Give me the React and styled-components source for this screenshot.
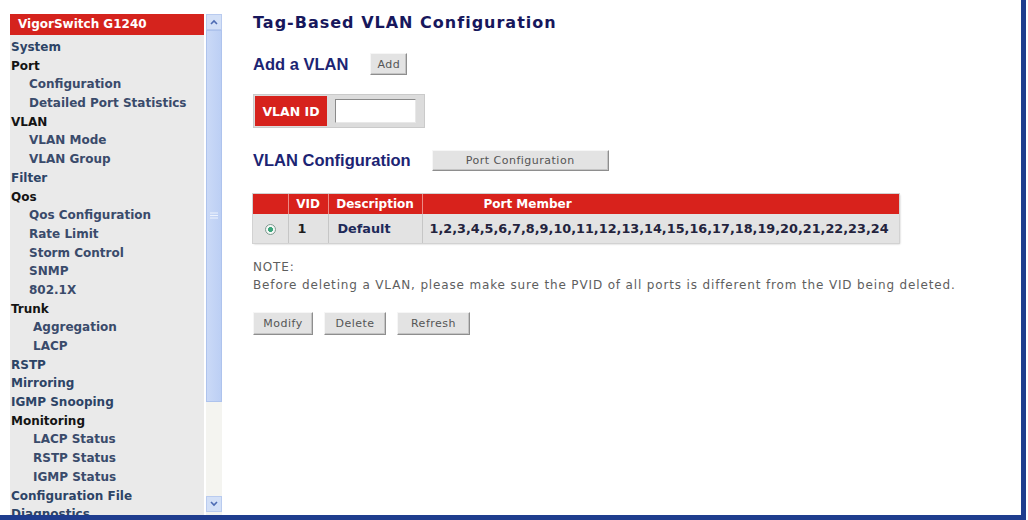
import React from 'react';
import styled, { createGlobalStyle } from 'styled-components';

const GlobalStyle = createGlobalStyle`
  html, body { margin: 0; padding: 0; background: #fff; }
  body { font-family: "DejaVu Sans", Verdana, sans-serif; overflow: hidden; }
`;

const Window = styled.div`
  box-sizing: border-box;
  width: 1026px;
  height: 520px;
  border-right: 5px solid #1f3d8e;
  border-bottom: 5px solid #1f3d8e;
  display: flex;
  padding: 14px 0 0 10px;
  overflow: hidden;
`;

/* ---------- left navigation frame ---------- */
const Sidebar = styled.aside`
  display: flex;
  gap: 2px;
  width: 212px;
  flex: none;
  height: 501px;
`;

const MenuPanel = styled.nav`
  width: 194px;
  background: #eaeaea;
  overflow: hidden;
  font: bold 12px "DejaVu Sans", Verdana, sans-serif;
`;

const Brand = styled.div`
  height: 21px;
  line-height: 21px;
  background: #d5231d;
  color: #fff;
  padding-left: 8px;
  white-space: nowrap;
`;

const MenuList = styled.ul`
  list-style: none;
  margin: 0;
  padding: 3px 0 0;
`;

const indent = [1, 19, 23];

const MenuItem = styled.li`
  height: 18.7px;
  line-height: 18.7px;
  white-space: nowrap;
  padding-left: ${(p) => indent[p.$level]}px;
  color: ${(p) => (p.$group ? '#141414' : p.$level ? '#3a4b6b' : '#2d4466')};
`;

const Scrollbar = styled.div`
  width: 16px;
  display: flex;
  flex-direction: column;
  padding-bottom: 3px;
  background: #f4f4f0;
`;

const ScrollButton = styled.div`
  box-sizing: border-box;
  height: 16px;
  background: #d3e0f7;
  border: 1px solid #b9cbef;
  display: flex;
  align-items: center;
  justify-content: center;
`;

const Thumb = styled.div`
  box-sizing: border-box;
  height: 372px;
  background: linear-gradient(90deg, #cad9f7, #bccff4);
  border: 1px solid #aec3ed;
  display: flex;
  align-items: center;
  justify-content: center;
`;

const Track = styled.div`
  flex: 1;
`;

/* ---------- content frame ---------- */
const Main = styled.main`
  margin-left: 31px;
  display: flex;
  flex-direction: column;
  align-items: flex-start;
`;

const Title = styled.h1`
  margin: 0;
  font: bold 16px "DejaVu Sans", Verdana, sans-serif;
  letter-spacing: 1px;
  line-height: 18px;
  color: #17175c;
`;

const Row = styled.div`
  display: flex;
  align-items: center;
  margin-top: ${(p) => p.$top}px;
  gap: ${(p) => p.$gap}px;
`;

const Heading = styled.h2`
  margin: 0;
  font: bold 16.5px "Liberation Sans", Arial, sans-serif;
  color: #1c2473;
`;

const Button = styled.button`
  box-sizing: border-box;
  width: ${(p) => p.$w}px;
  height: ${(p) => p.$h || 22}px;
  padding: 0;
  background: #e3e3e3;
  border: 1px solid;
  border-color: #f6f6f6 #8e8e8e #8e8e8e #f6f6f6;
  box-shadow: inset -1px -1px 0 #c4c4c4;
  font: 11px "DejaVu Sans", Verdana, sans-serif;
  letter-spacing: 0.5px;
  color: #555;
`;

const IdBox = styled.div`
  box-sizing: border-box;
  margin-top: 19px;
  width: 172px;
  height: 34px;
  padding: 1px 8px 1px 1px;
  display: flex;
  align-items: center;
  gap: 8px;
  background: #dcdcdc;
  border: 1px solid #cacaca;
`;

const IdLabel = styled.label`
  align-self: stretch;
  width: 74px;
  display: flex;
  align-items: center;
  justify-content: center;
  background: #d6221c;
  color: #fff;
  font: bold 12.5px "DejaVu Sans", Verdana, sans-serif;
`;

const IdInput = styled.input`
  box-sizing: border-box;
  width: 81px;
  height: 24px;
  border: 1px solid;
  border-color: #8a8a8a #e8e8e8 #e8e8e8 #8a8a8a;
  background: #fff;
  outline: none;
`;

const Table = styled.table`
  margin-top: 23px;
  width: 646px;
  border-collapse: collapse;
  table-layout: fixed;
  box-shadow: 0 0 0 1px #d2d2d2, 1px 1px 2px rgba(0, 0, 0, 0.25);
`;

const HeadCell = styled.th`
  height: 20px;
  padding: 0 0 0 ${(p) => p.$pad || 0}px;
  background: #d8221c;
  color: #fff;
  font: bold 12px "DejaVu Sans", Verdana, sans-serif;
  text-align: ${(p) => (p.$pad ? 'left' : 'center')};
  border-left: 1px solid #ec8b86;
  &:first-child { border-left: none; }
`;

const Cell = styled.td`
  height: 29px;
  padding: 0 0 0 ${(p) => p.$pad || 0}px;
  background: #e3e3e3;
  font: bold 12.8px "DejaVu Sans", Verdana, sans-serif;
  color: ${(p) => p.$color || '#23233d'};
  text-align: ${(p) => (p.$pad ? 'left' : 'center')};
  white-space: nowrap;
  border-left: 1px solid #c6c6c6;
  &:first-child { border-left: none; }
`;

const Radio = styled.span`
  display: inline-block;
  box-sizing: border-box;
  width: 11px;
  height: 11px;
  border-radius: 50%;
  border: 1px solid #7f9a90;
  background: radial-gradient(circle, #3aa57a 0 2.2px, #f4f8f6 2.8px);
  vertical-align: middle;
`;

const Note = styled.p`
  margin: 15px 0 0;
  font: 12px "DejaVu Sans", Verdana, sans-serif;
  letter-spacing: 0.85px;
  line-height: 18px;
  color: #5e5e5e;
  white-space: nowrap;
`;

const Chevron = ({ up }) => (
  <svg width="8" height="6" viewBox="0 0 8 6">
    <path
      d={up ? 'M1 5 L4 2 L7 5' : 'M1 1 L4 4 L7 1'}
      fill="none"
      stroke="#4d6bb3"
      strokeWidth="1.6"
    />
  </svg>
);

const Grip = () => (
  <svg width="8" height="8" viewBox="0 0 8 8">
    {[1, 3.5, 6].map((y) => (
      <line key={y} x1="0" x2="8" y1={y} y2={y} stroke="#eef3fd" strokeWidth="1" />
    ))}
  </svg>
);

const menu = [
  { t: 'System', l: 0 },
  { t: 'Port', l: 0, g: true },
  { t: 'Configuration', l: 1 },
  { t: 'Detailed Port Statistics', l: 1 },
  { t: 'VLAN', l: 0, g: true },
  { t: 'VLAN Mode', l: 1 },
  { t: 'VLAN Group', l: 1 },
  { t: 'Filter', l: 0 },
  { t: 'Qos', l: 0, g: true },
  { t: 'Qos Configuration', l: 1 },
  { t: 'Rate Limit', l: 1 },
  { t: 'Storm Control', l: 1 },
  { t: 'SNMP', l: 1 },
  { t: '802.1X', l: 1 },
  { t: 'Trunk', l: 0, g: true },
  { t: 'Aggregation', l: 2 },
  { t: 'LACP', l: 2 },
  { t: 'RSTP', l: 0 },
  { t: 'Mirroring', l: 0 },
  { t: 'IGMP Snooping', l: 0 },
  { t: 'Monitoring', l: 0, g: true },
  { t: 'LACP Status', l: 2 },
  { t: 'RSTP Status', l: 2 },
  { t: 'IGMP Status', l: 2 },
  { t: 'Configuration File', l: 0 },
  { t: 'Diagnostics', l: 0 },
];

const ports = Array.from({ length: 24 }, (_, i) => i + 1).join(',');

export default function App() {
  return (
    <>
      <GlobalStyle />
      <Window>
        <Sidebar>
          <MenuPanel>
            <Brand>VigorSwitch G1240</Brand>
            <MenuList>
              {menu.map((m) => (
                <MenuItem key={m.t} $level={m.l} $group={m.g}>
                  {m.t}
                </MenuItem>
              ))}
            </MenuList>
          </MenuPanel>
          <Scrollbar>
            <ScrollButton>
              <Chevron up />
            </ScrollButton>
            <Thumb>
              <Grip />
            </Thumb>
            <Track />
            <ScrollButton>
              <Chevron />
            </ScrollButton>
          </Scrollbar>
        </Sidebar>

        <Main>
          <Title>Tag-Based VLAN Configuration</Title>

          <Row $top={21} $gap={22}>
            <Heading>Add a VLAN</Heading>
            <Button $w={37}>Add</Button>
          </Row>

          <IdBox>
            <IdLabel htmlFor="vid">VLAN ID</IdLabel>
            <IdInput id="vid" />
          </IdBox>

          <Row $top={22} $gap={21}>
            <Heading>VLAN Configuration</Heading>
            <Button $w={177} $h={21}>
              Port Configuration
            </Button>
          </Row>

          <Table>
            <colgroup>
              <col style={{ width: 35 }} />
              <col style={{ width: 40 }} />
              <col style={{ width: 94 }} />
              <col />
            </colgroup>
            <thead>
              <tr>
                <HeadCell />
                <HeadCell>VID</HeadCell>
                <HeadCell>Description</HeadCell>
                <HeadCell $pad={61}>Port Member</HeadCell>
              </tr>
            </thead>
            <tbody>
              <tr>
                <Cell>
                  <Radio />
                </Cell>
                <Cell $pad={9} $color="#1e1e1e">1</Cell>
                <Cell $pad={9} $color="#1e2a5a">Default</Cell>
                <Cell $pad={7}>{ports}</Cell>
              </tr>
            </tbody>
          </Table>

          <Note>
            NOTE:
            <br />
            Before deleting a VLAN, please make sure the PVID of all ports is different from the VID being deleted.
          </Note>

          <Row $top={18} $gap={11}>
            <Button $w={60} $h={23}>Modify</Button>
            <Button $w={62} $h={23}>Delete</Button>
            <Button $w={73} $h={23}>Refresh</Button>
          </Row>
        </Main>
      </Window>
    </>
  );
}
